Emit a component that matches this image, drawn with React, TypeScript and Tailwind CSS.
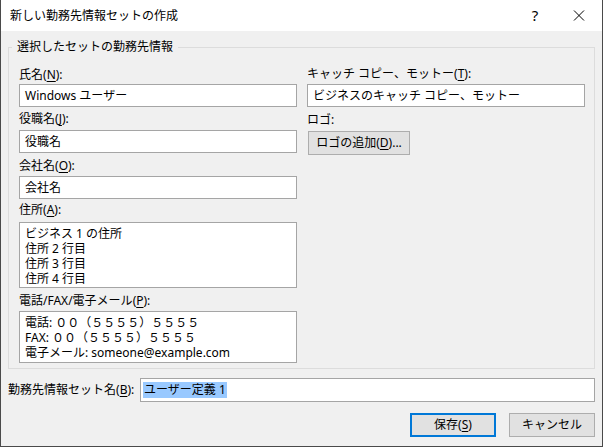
import React from 'react'

const font = { fontFamily: '"Noto Sans", "Noto Sans CJK JP", sans-serif' }

function Mn({ k }: { k: string }) {
  return (
    <>
      (<span className="underline underline-offset-2">{k}</span>)
    </>
  )
}

function Label({ children, className = '' }: { children: React.ReactNode; className?: string }) {
  return <div className={`h-[18px] leading-[18px] whitespace-nowrap ${className}`}>{children}</div>
}

function TextBox({ children, className = '' }: { children: React.ReactNode; className?: string }) {
  return (
    <div className={`bg-white border border-[#a5a5a5] px-[5px] leading-[15px] whitespace-nowrap ${className}`}>
      {children}
    </div>
  )
}

export default function App() {
  return (
    <div
      className="w-[603px] h-[447px] flex flex-col bg-[#f0f0f0] border-x border-b border-[#4a4a4a] text-[12px] text-black overflow-hidden"
      style={font}
    >
      {/* title bar */}
      <div className="h-[31px] bg-white flex items-center shrink-0">
        <span className="ml-[9px] flex-1">新しい勤務先情報セットの作成</span>
        <span className="w-[20px] text-center text-[15px] mr-[11px]">?</span>
        <svg width="46" height="31" viewBox="0 0 46 31">
          <path d="M18 10.5 L28 20.5 M28 10.5 L18 20.5" stroke="#000" strokeWidth="1" fill="none" />
        </svg>
      </div>

      <div className="flex-1 flex flex-col px-[7px]">
        <fieldset className="mt-[8px] border border-[#dcdcdc] pl-[10px] pr-[8px] pt-[11px] pb-[5px]">
          <legend className="ml-[-7px] px-[5px] h-[16px] leading-[16px]">選択したセットの勤務先情報</legend>
          <div className="grid grid-cols-[278px_278px] gap-x-[10px]">
            <div className="flex flex-col">
              <Label>
                氏名<Mn k="N" />:
              </Label>
              <TextBox className="h-[23px] flex items-center">Windows ユーザー</TextBox>

              <Label className="mt-[3px]">
                役職名<Mn k="J" />:
              </Label>
              <TextBox className="mt-[2px] h-[23px] flex items-center">役職名</TextBox>

              <Label className="mt-[4px]">
                会社名<Mn k="O" />:
              </Label>
              <TextBox className="mt-[1px] h-[23px] flex items-center">会社名</TextBox>

              <Label className="mt-[2px]">
                住所<Mn k="A" />:
              </Label>
              <TextBox className="mt-[3px] h-[66px] pt-[3px]">
                <div>ビジネス 1 の住所</div>
                <div>住所 2 行目</div>
                <div>住所 3 行目</div>
                <div>住所 4 行目</div>
              </TextBox>

              <Label className="mt-[4px]">
                電話/FAX/電子メール<Mn k="P" />:
              </Label>
              <TextBox className="mt-[1px] h-[52px] pt-[3px]">
                <div>電話: ００（５５５５）５５５５</div>
                <div>FAX: ００（５５５５）５５５５</div>
                <div>電子メール: someone@example.com</div>
              </TextBox>
            </div>

            <div className="flex flex-col">
              <Label className="mt-[-1px]">
                キャッチ コピー、モットー<Mn k="T" />:
              </Label>
              <TextBox className="mt-[1px] h-[23px] flex items-center px-[3px]">ビジネスのキャッチ コピー、モットー</TextBox>

              <Label className="mt-[4px]">ロゴ:</Label>
              <button className="mt-[2px] ml-px w-[102px] h-[24px] bg-[#e1e1e1] border border-[#adadad] flex items-center justify-center whitespace-nowrap">
                ロゴの追加<Mn k="D" />...
              </button>
            </div>
          </div>
        </fieldset>

        <div className="mt-[9px] flex items-center">
          <span className="w-[132px] whitespace-nowrap">
            勤務先情報セット名<Mn k="B" />:
          </span>
          <div className="flex-1 h-[24px] bg-white border border-[#a5a5a5] flex items-center pl-[2px]">
            <span className="bg-[#99c9ff] px-px leading-[16px]">ユーザー定義 1</span>
          </div>
        </div>

        <div className="mt-[11px] flex justify-end gap-[13px]">
          <button className="w-[86px] h-[24px] bg-[#e1e1e1] border-2 border-[#0078d7] flex items-center justify-center">
            保存<Mn k="S" />
          </button>
          <button className="w-[86px] h-[24px] bg-[#e1e1e1] border border-[#adadad] flex items-center justify-center">
            キャンセル
          </button>
        </div>
      </div>
    </div>
  )
}
